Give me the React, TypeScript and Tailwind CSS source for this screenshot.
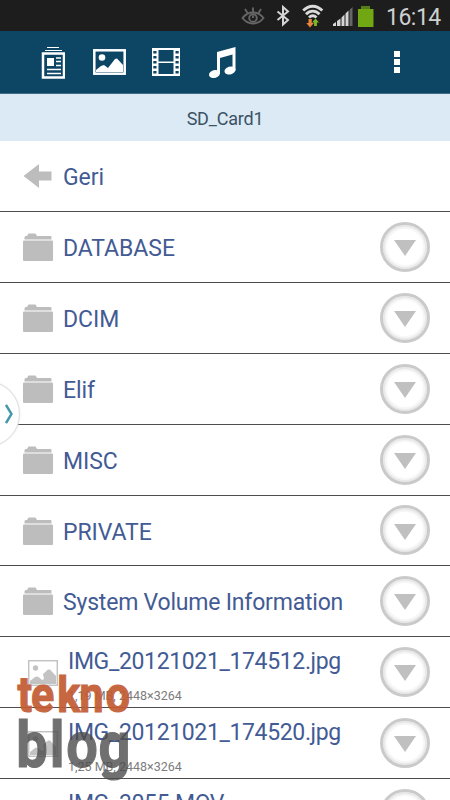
import React from 'react';

type Item = { name: string; kind: 'back' | 'folder' | 'image'; meta?: string; height: string };

const items: Item[] = [
  { name: 'Geri', kind: 'back', height: 'h-[71px]' },
  { name: 'DATABASE', kind: 'folder', height: 'h-[71px]' },
  { name: 'DCIM', kind: 'folder', height: 'h-[71px]' },
  { name: 'Elif', kind: 'folder', height: 'h-[71px]' },
  { name: 'MISC', kind: 'folder', height: 'h-[71px]' },
  { name: 'PRIVATE', kind: 'folder', height: 'h-[70px]' },
  { name: 'System Volume Information', kind: 'folder', height: 'h-[71px]' },
  { name: 'IMG_20121021_174512.jpg', kind: 'image', meta: '1,19 MB, 2448×3264', height: 'h-[71px]' },
  { name: 'IMG_20121021_174520.jpg', kind: 'image', meta: '1,25 MB, 2448×3264', height: 'h-[71px]' },
  { name: 'IMG_3055.MOV', kind: 'image', meta: '', height: 'h-[71px]' },
];

function StatusBar() {
  return (
    <header className="flex h-[31px] shrink-0 items-center bg-[#1d1d1d] pl-[241px]">
      <svg width="24" height="22" viewBox="0 0 24 22" fill="none" stroke="#666" strokeWidth="1.9">
        <path d="M1.5 13C5 8.500 8.500 7.500 12 7.500s7 1 10.500 5.500C19 17.500 15.500 18.500 12 18.500S5 17.500 1.500 13z" />
        <circle cx="12" cy="13" r="3.800" />
        <path d="M12 7V2.500M6.500 8L4 4M17.500 8L20 4M12 10.500V13" />
      </svg>
      <svg className="ml-[11px]" width="14" height="22" viewBox="0 0 14 22" fill="none" stroke="#d4d4d4" strokeWidth="2">
        <path d="M1.500 6.500L12 15L7 19.500V2L12 6.500L1.500 15" />
      </svg>
      <svg className="ml-[11px]" width="24" height="26" viewBox="0 0 24 26">
        <g fill="none" stroke="#dadada" strokeWidth="2.800">
          <path d="M2.200 7.500C8 1.800 15.500 1.800 21.300 7.500" />
          <path d="M5 11.200C9 7.200 14.500 7.200 18.500 11.200" />
          <path d="M8 14.600C10.300 12.400 13.200 12.400 15.500 14.600" />
        </g>
        <path d="M7.500 16h3.300v4h2.100L9 24.500L5.300 20h2.200z" fill="#e8843c" />
        <path d="M14.500 15.500L18 19.500h-2.100V23h-2.800v-3.500h-2z" fill="#80b928" />
      </svg>
      <svg className="ml-[7px]" width="22" height="22" viewBox="0 0 22 22">
        <path d="M1 21v-2l3-2v4zM5 21v-5l3.500-2.500V21zM9.500 21v-8.500l3-3V21zM13.500 21V8.500l3-3V21z" fill="#d5d5d5" />
        <path d="M17.500 21V5l3-3v19z" fill="#666" />
      </svg>
      <svg className="ml-[4px]" width="16" height="22" viewBox="0 0 16 22">
        <path d="M0 4h15.500v18H0z" fill="#70a713" />
        <path d="M3 1h9v3H3z" fill="#557d18" />
      </svg>
      <span className="ml-[12px] mt-[3px] text-[23px] leading-none tracking-[-0.5px] text-[#d0d0d0]">16:14</span>
    </header>
  );
}

function Toolbar() {
  return (
    <nav className="flex h-[63px] shrink-0 items-center border-b border-[#406b85] bg-[#0d4565] pl-[41px] text-white">
      <svg className="mt-px" width="24" height="34" viewBox="0 0 24 34" fill="none" stroke="currentColor">
        <path d="M6 1.500h12M4 4.500h17" strokeWidth="1.200" />
        <rect x="2" y="7.500" width="21" height="24" strokeWidth="2.500" />
        <path d="M6 12h7v8H6z" fill="currentColor" stroke="none" />
        <path d="M15 12h5M15 15.500h5M15 19.500h5M6 23.500h14M6 27.500h14" strokeWidth="1.500" />
      </svg>
      <svg className="ml-[28px]" width="33" height="26" viewBox="0 0 33 26">
        <rect x="1.300" y="1.300" width="30.400" height="23.400" fill="none" stroke="currentColor" strokeWidth="2.500" />
        <circle cx="9" cy="8.500" r="3.300" fill="currentColor" />
        <path d="M3 23v-2l5-4 3-1 4 3 7-9 2-.5L30 16v7z" fill="currentColor" />
      </svg>
      <svg className="ml-[26px]" width="28" height="28" viewBox="0 0 28 28">
        <path fill="currentColor" fillRule="evenodd" d="M0 0h28v28H0zM6.500 2v11.500h15V2zM6.500 15v11h15V15zM1.300 3v2.500h3.200V3zM1.300 8v2.500h3.200V8zM1.300 13v2.500h3.200V13zM1.300 18v2.500h3.200V18zM1.300 23v2.500h3.200V23zM23.500 3v2.500h3.200V3zM23.500 8v2.500h3.200V8zM23.500 13v2.500h3.200V13zM23.500 18v2.500h3.200V18zM23.500 23v2.500h3.200V23z" />
      </svg>
      <svg className="ml-[28px]" width="28" height="33" viewBox="0 0 28 33" fill="currentColor">
        <path d="M9 6L27.500 1v23.500h-3V8.500L12 12v16H9z" />
        <ellipse cx="6.500" cy="28" rx="5.600" ry="3.900" transform="rotate(-18 6.500 28)" />
        <ellipse cx="22" cy="24.500" rx="5.600" ry="3.900" transform="rotate(-18 22 24.500)" />
      </svg>
      <div className="ml-[158px] flex flex-col gap-[2px]">
        <i className="block h-[6px] w-1.5 bg-white" />
        <i className="block h-[6px] w-1.5 bg-white" />
        <i className="block h-[6px] w-1.5 bg-white" />
      </div>
    </nav>
  );
}

function RowIcon({ kind }: { kind: Item['kind'] }) {
  if (kind === 'back') {
    return (
      <svg width="30" height="26" viewBox="0 0 30 26" fill="#bdbdbd">
        <path d="M.5 13L16 1v7.500h12.500v9H16V25z" />
      </svg>
    );
  }
  if (kind === 'folder') {
    return (
      <svg width="30" height="28" viewBox="0 0 30 28" fill="#bdbdbd">
        <path d="M1.500 6.500V4l1-1H4l1.500-2.500h7L14 3h14l.5 1v2.500z" />
        <rect y="7.500" width="30" height="20.500" rx="1" />
      </svg>
    );
  }
  return (
    <svg className="ml-[5px] mt-[2px]" width="30" height="26" viewBox="0 0 30 26" fill="#c3c3c3">
      <rect x=".7" y=".7" width="28.600" height="24.600" fill="none" stroke="#c3c3c3" strokeWidth="1.500" />
      <circle cx="7.500" cy="8" r="2.700" />
      <path d="M2 24v-3l5-4 3-.5 4 3.500 2-1 -1-5 5-4.500h2l6 6.500V24z" />
    </svg>
  );
}

function MoreButton() {
  return (
    <button className="-mt-px flex size-[50px] shrink-0 items-center justify-center rounded-full border-[3px] border-[#cacaca] bg-white shadow-[inset_0_0_0_2px_#e9e9e9,inset_0_0_0_4px_#f7f7f7]">
      <svg className="mt-[3px]" width="22" height="16" viewBox="0 0 22 16"><path d="M0 0h22L11 16z" fill="#c0c0c0" /></svg>
    </button>
  );
}

function Row({ item }: { item: Item }) {
  const image = item.kind === 'image';
  return (
    <li className={`flex shrink-0 items-center border-b border-[#4d4d4d] pl-[23px] pr-5 ${item.height}`}>
      <RowIcon kind={item.kind} />
      {image ? (
        <div className="ml-[10px] flex flex-1 flex-col self-stretch pt-[11px]">
          <span className="whitespace-nowrap text-[23px] leading-7 tracking-[-0.36px] text-[#435b94]">{item.name}</span>
          <span className="mt-[12px] whitespace-nowrap text-[12.500px] leading-4 text-[#7c7c7c]">{item.meta}</span>
        </div>
      ) : (
        <span className={`ml-[10px] mt-[4px] flex-1 whitespace-nowrap text-[23px] leading-7 text-[#435b94] ${item.name.length > 12 ? 'tracking-[-0.2px]' : 'tracking-[-0.05px]'}`}>{item.name}</span>
      )}
      {item.kind !== 'back' && <MoreButton />}
    </li>
  );
}

export default function App() {
  return (
    <main className="relative flex h-[800px] w-[450px] flex-col overflow-hidden bg-white font-[Roboto,sans-serif]">
      <StatusBar />
      <Toolbar />
      <h1 className="flex h-[47px] shrink-0 items-center justify-center bg-[#dbeaf4] pt-[2px] text-[18px] tracking-[-0.2px] text-[#3c5265]">SD_Card1</h1>
      <ul className="flex flex-col">{items.map((item) => <Row key={item.name} item={item} />)}</ul>
      <div className="absolute left-[-46px] top-[381px] flex size-[66px] items-center justify-end rounded-full border border-[#dedede] bg-white pr-[6px] shadow-[0_0_2px_#e5e5e5]">
        <svg width="8" height="20" viewBox="0 0 8 20" fill="none" stroke="#4498ad" strokeWidth="2.400"><path d="M1 1l5.500 9L1 19" /></svg>
      </div>
      <svg className="pointer-events-none absolute left-0 top-[660px]" width="150" height="140" viewBox="0 0 150 140" fontFamily="Roboto, sans-serif" fontWeight="700">
        <text transform="scale(.86 1)" x="20.500 36 66.500 92.500 123" y="52" fontSize="50" fill="#c35b33" stroke="#c35b33" strokeWidth="1.200" opacity=".92">tekno</text>
        <text transform="scale(.86 1)" x="19 58 77 114.500" y="107" fontSize="65" fill="#4d4d4d" stroke="#4d4d4d" strokeWidth="1.200" opacity=".8">blog</text>
      </svg>
    </main>
  );
}
